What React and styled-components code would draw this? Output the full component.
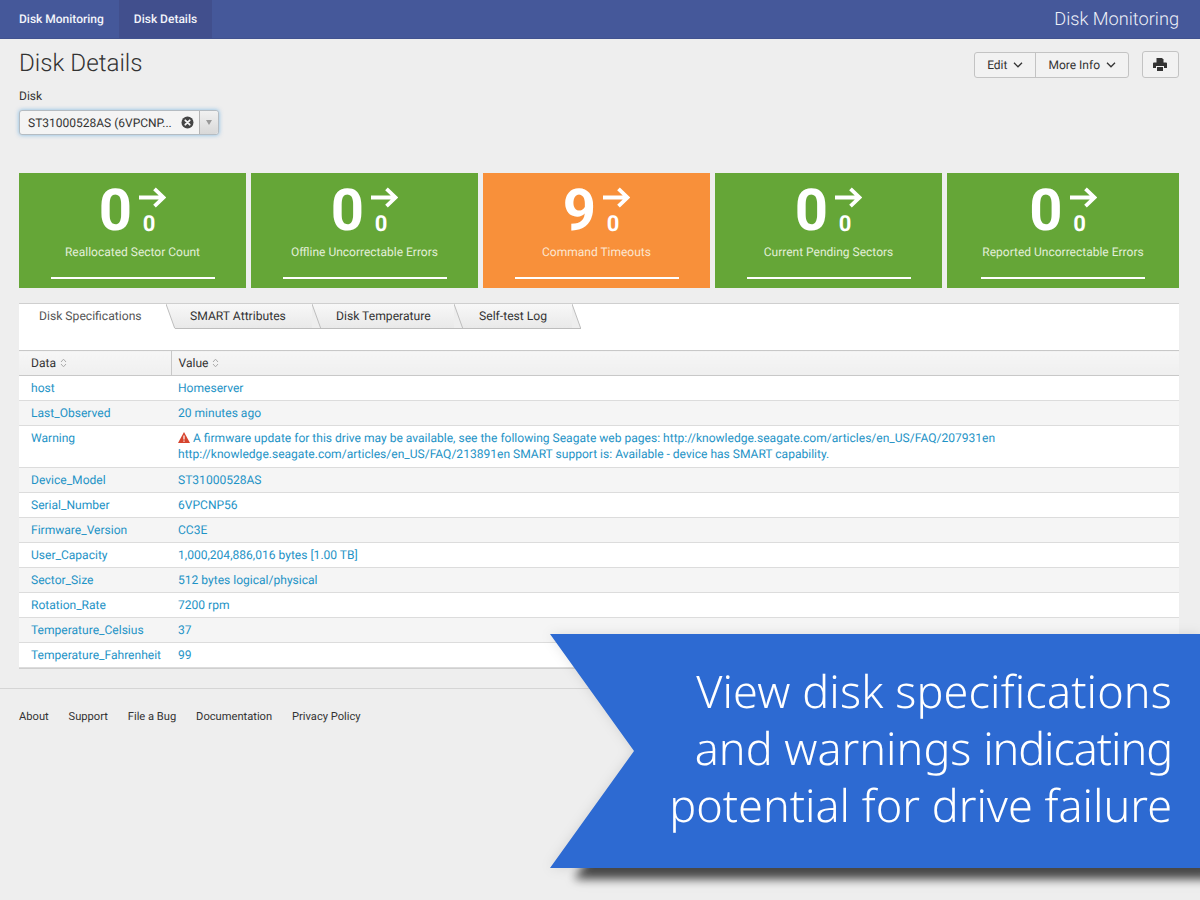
import React from "react";
import styled, { createGlobalStyle } from "styled-components";

const Global = createGlobalStyle`
  html, body { margin: 0; padding: 0; background: #eeeeee; }
  body { font-family: Roboto, "Liberation Sans", sans-serif; width: 1200px; height: 900px; overflow: hidden; text-rendering: geometricPrecision; }
  * { box-sizing: border-box; }
`;

const Page = styled.div`position: relative; width: 1200px; height: 900px; overflow: hidden;`;
const Nav = styled.header`
  height: 39px; background: #45589a; display: flex; align-items: stretch; padding-left: 4px;
  border-bottom: 1px solid #41528f;
`;
const NavItem = styled.a`
  display: flex; align-items: center; padding: 0 15px; color: #f2f4fa; font-size: 12px; font-weight: 500;
  background: ${p => (p.$active ? "#414f8d" : "transparent")};
`;
const Brand = styled.div`margin-left: auto; margin-right: 21px; align-self: center; color: #eef0f8; font-size: 18.2px; font-weight: 300;`;

const Head = styled.div`display: flex; justify-content: space-between; padding: 0 21px 0 19px; height: 51px;`;
const Title = styled.h1`margin: 10px 0 0; font-size: 24.2px; line-height: 29px; font-weight: 300; color: #333;`;
const Actions = styled.div`display: flex; align-items: flex-start; padding-top: 13px; gap: 13px;`;
const Group = styled.div`display: flex; height: 26px; border: 1px solid #c3c3c3; border-radius: 3px; background: #f2f2f2;`;
const GroupBtn = styled.div`
  display: flex; align-items: center; gap: 6px; padding: 0 12px; font-size: 12px; color: #333;
  & + & { border-left: 1px solid #c3c3c3; }
`;
const PrintBtn = styled.div`
  width: 37px; height: 27px; margin-top: -1px; padding-right: 2px; border: 1px solid #c3c3c3; border-radius: 3px; background: #f2f2f2;
  display: flex; align-items: center; justify-content: center;
`;

const Field = styled.div`padding-left: 19px; height: 83px;`;
const Label = styled.div`font-size: 12px; line-height: 12px; color: #333;`;
const Select = styled.div`
  margin-top: 8px; width: 200px; height: 25px; display: flex; border: 1px solid #b5bcc2; border-radius: 3px;
  background: #f4f4f4; box-shadow: 0 0 4px rgba(95,170,225,.75);
`;
const SelectValue = styled.div`
  flex: 1; display: flex; align-items: center; justify-content: space-between; padding: 0 5px 0 8px;
  font-size: 12px; color: #333;
`;
const SelectCaret = styled.div`
  width: 19px; border-left: 1px solid #b5b5b5; display: flex; align-items: center; justify-content: center;
  background: linear-gradient(#f1f1f1, #d8d8d8); border-radius: 0 3px 3px 0;
  &::after { content: ""; border-left: 3px solid transparent; border-right: 3px solid transparent; border-top: 5px solid #999; }
`;

const Cards = styled.section`
  display: grid; grid-template-columns: repeat(4, 227px) 232px; gap: 5px; padding-left: 19px;
`;
const Card = styled.div`
  height: 115px; background: ${p => (p.$tone === "orange" ? "#f8903a" : "#65a637")}; color: #fff;
  display: flex; flex-direction: column; align-items: center; padding-top: 9px;
`;
const Metric = styled.div`display: flex; align-items: flex-start; gap: 7px; height: 60px;`;
const BigNum = styled.div`font-size: 58px; line-height: 58px; font-weight: 700;`;
const Trend = styled.div`display: flex; flex-direction: column; align-items: center; width: 27px; padding-top: 5px;`;
const SmallNum = styled.div`font-size: 22px; line-height: 22px; font-weight: 700; margin: 5px 7px 0 0;`;
const CardLabel = styled.div`font-size: 12px; line-height: 14px; margin-top: 3px; color: ${p => (p.$tone === "orange" ? "#fde6d0" : "#e2efd8")};`;
const Rule = styled.div`width: 164px; height: 2px; background: #fff; margin-top: 18px;`;

const Panel = styled.section`margin: 15px 21px 0 19px; background: #fff; border-top: 1px solid #cfcfcf; border-bottom: 1px solid #cfcfcf;`;
const Tabs = styled.nav`display: flex; height: 25px; background: #fff;`;
const Tab = styled.div`
  position: relative; z-index: ${p => p.$z}; display: flex; align-items: center; height: 25px;
  width: ${p => p.$w}px; padding: 0 0 1px ${p => p.$left}px;
  font-size: 12.15px; color: ${p => (p.$active ? "#555" : "#333")};
  background: ${p => (p.$active ? "#fff" : "linear-gradient(#f8f8f8, #e9e9e9)")};
  border-bottom: 1px solid ${p => (p.$active ? "#fff" : "#bdbdbd")};
`;
const TabEdge = styled.svg`position: absolute; right: -9px; top: 0; width: 9px; height: 25px; z-index: 1;`;
const Table = styled.table`width: 100%; margin-top: 21px; border-collapse: collapse; font-size: 12.06px; table-layout: fixed;`;
const Th = styled.th`
  height: 25px; padding: 0 0 0 ${p => p.$pad}px; text-align: left; font-weight: 400; color: #333;
  background: linear-gradient(#f6f6f6, #efefef); border-top: 1px solid #c8c8c8; border-bottom: 1px solid #c8c8c8;
  & + & { border-left: 1px solid #c8c8c8; }
`;
const Sort = styled.svg`width: 7px; height: 10px; margin-left: 1px; vertical-align: -1px;`;
const Row = styled.tr`background: ${p => (p.$alt ? "#f5f5f5" : "#fff")}; border-bottom: 1px solid #dcdcdc;`;
const Cell = styled.td`
  vertical-align: top; padding: 4px 7px 0 ${p => p.$pad}px; height: ${p => (p.$tall ? 42 : 25)}px; color: #1e93c6; line-height: 16px;
`;
const WarnIcon = styled.svg`width: 12px; height: 11px; margin-right: 3px; vertical-align: -1px;`;

const Footer = styled.footer`margin-top: 19px; border-top: 1px solid #d5d5d5; padding: 21px 19px 0; display: flex; gap: 19.9px; font-size: 11.15px; color: #333;`;

const Callout = styled.aside`
  position: absolute; left: 550px; top: 634px; width: 650px; height: 234px;
  filter: drop-shadow(24px 11px 5px rgba(0,0,0,.68)) drop-shadow(0 0 6px rgba(0,0,0,.1));
`;
const CalloutBody = styled.div`
  width: 100%; height: 100%; background: #2d6ad2; padding: 29px 28px 0 0; text-align: right;
  clip-path: polygon(0 0, 100% 0, 100% 100%, 0 100%, 84px 117px);
  color: #fff; font-family: "Noto Sans", "Open Sans", sans-serif; font-weight: 300; font-size: 45px; line-height: 57px;
`;
const Line = styled.div`white-space: nowrap; letter-spacing: ${p => p.$track || 0}px;`;
const Tight = styled.span`letter-spacing: -1.1px;`;

const Chevron = () => (
  <svg width="10" height="6" viewBox="0 0 10 6" fill="none" stroke="#333" strokeWidth="1.3"><path d="M1 .8 5 4.8 9 .8" /></svg>
);
const Printer = () => (
  <svg width="14" height="13" viewBox="0 0 14 13" fill="#333">
    <path d="M3.5 0h5.5L10.5 1.5V5h-7z" />
    <path d="M0 5.5a1 1 0 0 1 1-1h12a1 1 0 0 1 1 1V10h-3V8H3v2H0z" />
    <path d="M4 9h6v4H4z" />
  </svg>
);
const Clear = () => (
  <svg width="13" height="13" viewBox="0 0 13 13">
    <circle cx="6.5" cy="6.5" r="6" fill="#444" />
    <path d="M4.3 4.3 8.7 8.7M8.7 4.3 4.3 8.7" stroke="#f4f4f4" strokeWidth="1.8" strokeLinecap="round" />
  </svg>
);
const Arrow = () => (
  <svg width="27" height="22" viewBox="0 0 27 22" fill="none" stroke="#fff" strokeWidth="3.8">
    <path d="M0 10.5h24.5M15.5 1.8l9 8.7-9 8.7" />
  </svg>
);
const SortIcon = () => (
  <Sort viewBox="0 0 7 10" fill="none" stroke="#aaa" strokeWidth="1"><path d="M1 4 3.5 1.2 6 4M1 6l2.5 2.8L6 6" /></Sort>
);

const cards = [
  { v: "0", label: "Reallocated Sector Count" },
  { v: "0", label: "Offline Uncorrectable Errors" },
  { v: "9", label: "Command Timeouts", tone: "orange" },
  { v: "0", label: "Current Pending Sectors" },
  { v: "0", label: "Reported Uncorrectable Errors" },
];
const rows = [
  ["host", "Homeserver"],
  ["Last_Observed", "20 minutes ago"],
  ["Warning", null],
  ["Device_Model", "ST31000528AS"],
  ["Serial_Number", "6VPCNP56"],
  ["Firmware_Version", "CC3E"],
  ["User_Capacity", "1,000,204,886,016 bytes [1.00 TB]"],
  ["Sector_Size", "512 bytes logical/physical"],
  ["Rotation_Rate", "7200 rpm"],
  ["Temperature_Celsius", "37"],
  ["Temperature_Fahrenheit", "99"],
];
const tabs = [
  { t: "Disk Specifications", left: 20, w: 147, active: true },
  { t: "SMART Attributes", left: 24, w: 146 },
  { t: "Disk Temperature", left: 24, w: 142 },
  { t: "Self-test Log", left: 25, w: 118 },
];

export default function App() {
  return (
    <Page>
      <Global />
      <Nav>
        <NavItem>Disk Monitoring</NavItem>
        <NavItem $active>Disk Details</NavItem>
        <Brand>Disk Monitoring</Brand>
      </Nav>
      <Head>
        <Title>Disk Details</Title>
        <Actions>
          <Group>
            <GroupBtn>Edit <Chevron /></GroupBtn>
            <GroupBtn>More Info <Chevron /></GroupBtn>
          </Group>
          <PrintBtn><Printer /></PrintBtn>
        </Actions>
      </Head>
      <Field>
        <Label>Disk</Label>
        <Select>
          <SelectValue>ST31000528AS (6VPCNP... <Clear /></SelectValue>
          <SelectCaret />
        </Select>
      </Field>
      <Cards>
        {cards.map(c => (
          <Card key={c.label} $tone={c.tone}>
            <Metric>
              <BigNum>{c.v}</BigNum>
              <Trend><Arrow /><SmallNum>0</SmallNum></Trend>
            </Metric>
            <CardLabel $tone={c.tone}>{c.label}</CardLabel>
            <Rule />
          </Card>
        ))}
      </Cards>
      <Panel>
        <Tabs>
          {tabs.map((t, i) => (
            <Tab key={t.t} $active={t.active} $left={t.left} $w={t.w} $z={10 - i}>
              {t.t}
              <TabEdge viewBox="0 0 9 25" fill="none">
                <path d="M0 0 9 25 H0z" fill={t.active ? "#fff" : "#eeeeee"} />
                <path d="M0 0 8.6 24" stroke="#bdbdbd" />
                {!t.active && <path d="M0 24.5H9" stroke="#bdbdbd" />}
              </TabEdge>
            </Tab>
          ))}
        </Tabs>
        <Table>
          <colgroup><col width="152" /><col /></colgroup>
          <thead>
            <tr>
              <Th $pad={12}>Data <SortIcon /></Th>
              <Th $pad={7}>Value <SortIcon /></Th>
            </tr>
          </thead>
          <tbody>
            {rows.map(([k, v], i) => (
              <Row key={k} $alt={i % 2 === 1}>
                <Cell $pad={12} $tall={!v}>{k}</Cell>
                <Cell $pad={7} $tall={!v}>
                  {v || (
                    <>
                      <WarnIcon viewBox="0 0 12 11">
                        <path d="M6 0 12 11H0z" fill="#d6442e" />
                        <path d="M6 3.5v4M6 8.4v1.4" stroke="#fff" strokeWidth="1.2" />
                      </WarnIcon>
                      A firmware update for this drive may be available, see the following Seagate web pages: http://knowledge.seagate.com/articles/en_US/FAQ/207931en<br />
                      http://knowledge.seagate.com/articles/en_US/FAQ/213891en SMART support is: Available - device has SMART capability.
                    </>
                  )}
                </Cell>
              </Row>
            ))}
          </tbody>
        </Table>
      </Panel>
      <Footer>
        <span>About</span>
        <span>Support</span>
        <span>File a Bug</span>
        <span>Documentation</span>
        <span>Privacy Policy</span>
      </Footer>
      <Callout>
        <CalloutBody>
          <Line $track={0.12}>View disk specifications</Line>
          <Line>and warnings <Tight>indicating</Tight></Line>
          <Line>potential for drive failure</Line>
        </CalloutBody>
      </Callout>
    </Page>
  );
}
